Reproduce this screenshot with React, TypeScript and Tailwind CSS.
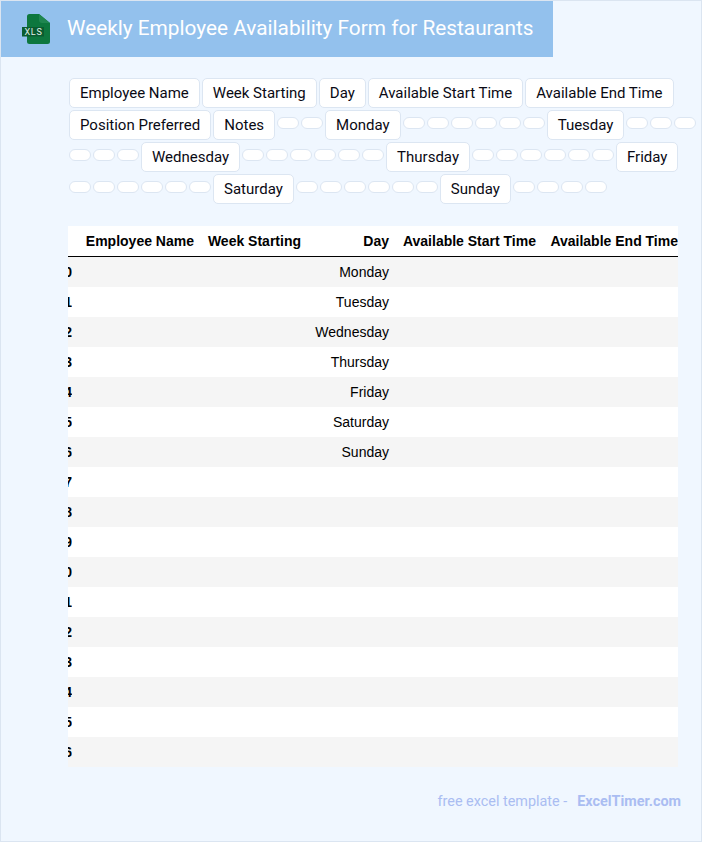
import React from 'react';

// chip list: text chips and empty ones, in page order
const chips = [
  'Employee Name', 'Week Starting', 'Day', 'Available Start Time', 'Available End Time',
  'Position Preferred', 'Notes', '', '', 'Monday', '', '', '', '', '', '', 'Tuesday', '', '', '',
  '', '', '', 'Wednesday', '', '', '', '', '', '', 'Thursday', '', '', '', '', '', '', 'Friday',
  '', '', '', '', '', '', 'Saturday', '', '', '', '', '', '', 'Sunday', '', '', '', '',
];

const days = ['Monday', 'Tuesday', 'Wednesday', 'Thursday', 'Friday', 'Saturday', 'Sunday'];
const rows = Array.from({ length: 17 }, (_, i) => i);
const gridCols = 'grid grid-cols-[4px_122px_107px_88px_147px_142px]';

function XlsIcon() {
  return (
    <svg width="28" height="30" viewBox="0 0 28 30" aria-hidden="true">
      <path
        d="M7.500 0H17l11 9v18.500a2.500 2.500 0 0 1-2.500 2.500h-18A2.500 2.500 0 0 1 5 27.500v-25A2.500 2.500 0 0 1 7.500 0z"
        fill="#0d773e"
      />
      <path d="M17 0l11 9h-8a3 3 0 0 1-3-3z" fill="#1f8650" />
      <rect x="0" y="13" width="22" height="9.500" fill="#0a5c30" />
      <text x="11.500" y="21" textAnchor="middle" fontSize="9" fontFamily="Roboto, sans-serif" fill="#e2f2e9" letterSpacing="0.7">
        XLS
      </text>
    </svg>
  );
}

function Chip({ label }: { label: string }) {
  if (!label) {
    return <span className="mt-[7px] w-[22px] h-[12px] bg-white border border-[#dce6f2] rounded-[6px]" />;
  }
  return (
    <span className="h-[30px] px-[10px] flex items-center bg-white border border-[#dce6f2] rounded-[5px] text-[15px] text-[#0a0a14] whitespace-nowrap">
      {label}
    </span>
  );
}

export default function App() {
  return (
    <div className="w-[702px] h-[842px] bg-[#f0f7ff] border border-[#dbe5f1] font-['Roboto',sans-serif] overflow-hidden">
      {/* Title bar */}
      <div className="w-[552px] h-[56px] bg-[#93c1ed] flex items-center pl-[21px] gap-[17px]">
        <XlsIcon />
        <h1 className="text-[20.8px] leading-[28px] pb-[3px] text-white font-normal whitespace-nowrap">
          Weekly Employee Availability Form for Restaurants
        </h1>
      </div>

      {/* Column chips */}
      <div className="mt-[21px] ml-[68px] w-[630px] flex flex-wrap items-start gap-[2px]">
        {chips.map((label, i) => (
          <Chip key={i} label={label} />
        ))}
      </div>

      {/* Table, scrolled a little to the right */}
      <div className="mt-[22px] ml-[67px] w-[610px] font-['Liberation_Sans',Arial,sans-serif] text-[14px] text-black">
        <div className={`${gridCols} h-[31px] items-center bg-white border-b border-black font-bold text-right whitespace-nowrap`}>
          <span />
          <span>Employee Name</span>
          <span>Week Starting</span>
          <span>Day</span>
          <span>Available Start Time</span>
          <span className="flex justify-end overflow-hidden">Available End Time</span>
        </div>
        {rows.map((i) => (
          <div key={i} className={`${gridCols} h-[30px] items-center text-right ${i % 2 === 0 ? 'bg-[#f5f5f5]' : 'bg-white'}`}>
            <span className="flex justify-end overflow-hidden font-bold">{i}</span>
            <span />
            <span />
            <span>{days[i] ?? ''}</span>
            <span />
            <span />
          </div>
        ))}
      </div>

      {/* Footer */}
      <div className="mt-[25px] pr-[20px] flex justify-end gap-[10px] text-[14.4px] leading-[20px] text-[#aabdf2]">
        <span>free excel template -</span>
        <span className="font-bold">ExcelTimer.com</span>
      </div>
    </div>
  );
}
